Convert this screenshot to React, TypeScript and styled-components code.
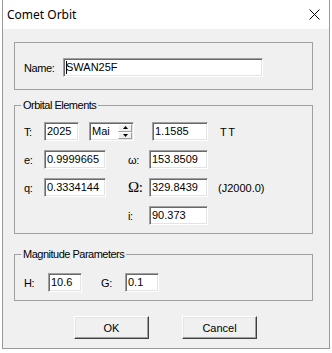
import styled, { createGlobalStyle } from "styled-components";

const GlobalStyle = createGlobalStyle`
  html, body {
    margin: 0;
    padding: 0;
    background: #ffffff;
  }
  body {
    font-family: "Liberation Sans", Arial, sans-serif;
    font-size: 11px;
    color: #000;
  }
`;

const Dialog = styled.div`
  margin-left: 2px;
  width: 328px;
  height: 349px;
  box-sizing: border-box;
  border: 1px solid #9a9a9a;
  border-top: none;
  background: #f0f0f0;
  display: flex;
  flex-direction: column;
`;

const TitleBar = styled.div`
  height: 29px;
  flex: 0 0 auto;
  background: #fff;
  display: flex;
  align-items: center;
  justify-content: space-between;
  padding: 0 9px 0 4px;
  font-family: "Noto Sans", "Open Sans", sans-serif;
  font-size: 12px;
`;

const Body = styled.div`
  flex: 1 1 auto;
  display: flex;
  flex-direction: column;
  padding: 13px 16px 0 11px;
`;

const Group = styled.fieldset<{ $top?: number }>`
  margin: ${(p) => p.$top ?? 0}px 0 0 0;
  border: 1px solid #a0a0a0;
  padding: ${(p) => (p.$top === undefined ? "15px 9px 12px" : "10px 9px 8px")};
  min-width: 0;
`;

const Legend = styled.legend`
  padding: 0 2px;
  margin-left: -3px;
  line-height: 13px;
  font-size: 11px;
  letter-spacing: -0.5px;
`;

const Row = styled.div<{ $gap?: number }>`
  display: flex;
  align-items: center;
  height: 19px;
  margin-top: ${(p) => p.$gap ?? 0}px;
`;

const Grid = styled.div`
  display: grid;
  grid-template-columns: 20px 62px 22px 21px 59px auto;
  grid-auto-rows: 19px;
  row-gap: 9px;
  align-items: center;
  margin-top: 9px;
`;

const Label = styled.span<{ $w: number; $ml?: number }>`
  width: ${(p) => p.$w}px;
  margin-left: ${(p) => p.$ml ?? 0}px;
  flex: 0 0 auto;
  letter-spacing: -0.4px;
  white-space: nowrap;
`;

const GreekLabel = styled(Label)`
  font-family: "Liberation Serif", "Times New Roman", serif;
  font-size: 15px;
  line-height: 1;
`;

const Note = styled.span<{ $ml: number; $spaced?: boolean }>`
  margin-left: ${(p) => p.$ml}px;
  letter-spacing: ${(p) => (p.$spaced ? "1.5px" : "0")};
  white-space: nowrap;
`;

const Field = styled.div<{ $w: number; $ml?: number }>`
  width: ${(p) => p.$w}px;
  margin-left: ${(p) => p.$ml ?? 0}px;
  flex: 0 0 auto;
  height: 19px;
  box-sizing: border-box;
  background: #fff;
  border: 1px solid;
  border-color: #a0a0a0 #ffffff #ffffff #a0a0a0;
  box-shadow: inset 1px 1px 0 #696969, inset -1px -1px 0 #e3e3e3;
  padding: 0 1px 0 2px;
  display: flex;
  align-items: center;
  line-height: 1;
  white-space: nowrap;
`;

const Caret = styled.span`
  width: 1px;
  height: 13px;
  background: #000;
  margin-right: -1px;
`;

const Spinner = styled.div`
  margin-left: auto;
  width: 14px;
  height: 15px;
  display: flex;
  flex-direction: column;
`;

const SpinHalf = styled.div`
  flex: 1 1 0;
  box-sizing: border-box;
  border: 1px solid;
  border-color: #fff #a0a0a0 #a0a0a0 #fff;
  background: #f0f0f0;
  display: flex;
  align-items: center;
  justify-content: center;
`;

const ButtonRow = styled.div`
  display: flex;
  gap: 33px;
  padding-left: 60px;
  margin-top: 15px;
`;

const Button = styled.button`
  width: 75px;
  height: 23px;
  box-sizing: border-box;
  background: #f0f0f0;
  border: 1px solid;
  border-color: #ffffff #404040 #404040 #ffffff;
  box-shadow: inset -1px -1px 0 #a0a0a0, inset 1px 1px 0 #e3e3e3;
  font-family: "Liberation Sans", Arial, sans-serif;
  font-size: 11px;
  color: #000;
  padding: 0;
`;

function Arrow({ up }: { up: boolean }) {
  return (
    <svg width="5" height="3" viewBox="0 0 5 3">
      <path d={up ? "M2.5 0 L5 3 L0 3 Z" : "M0 0 L5 0 L2.5 3 Z"} fill="#000" />
    </svg>
  );
}

function CloseIcon() {
  return (
    <svg width="11" height="11" viewBox="0 0 11 11">
      <path d="M0.5 0.5 L10.5 10.5 M10.5 0.5 L0.5 10.5" stroke="#000" strokeWidth="1" fill="none" />
    </svg>
  );
}

export default function App() {
  return (
    <>
      <GlobalStyle />
      <Dialog>
        <TitleBar>
          <span>Comet Orbit</span>
          <CloseIcon />
        </TitleBar>
        <Body>
          <Group>
            <Row>
              <Label $w={39}>Name:</Label>
              <Field $w={200}>
                <Caret />
                SWAN25F
              </Field>
            </Row>
          </Group>

          <Group $top={9}>
            <Legend>Orbital Elements</Legend>
            <Row>
              <Label $w={20}>T:</Label>
              <Field $w={35}>2025</Field>
              <Field $w={45} $ml={10}>
                Mai
                <Spinner>
                  <SpinHalf>
                    <Arrow up />
                  </SpinHalf>
                  <SpinHalf>
                    <Arrow up={false} />
                  </SpinHalf>
                </Spinner>
              </Field>
              <Field $w={56} $ml={18}>1.1585</Field>
              <Note $ml={12} $spaced>TT</Note>
            </Row>
            <Grid>
              <Label $w={20}>e:</Label>
              <Field $w={62}>0.9999665</Field>
              <span />
              <Label $w={21}>ω:</Label>
              <Field $w={59}>153.8509</Field>
              <span />

              <Label $w={20}>q:</Label>
              <Field $w={62}>0.3334144</Field>
              <span />
              <GreekLabel $w={21}>Ω:</GreekLabel>
              <Field $w={59}>329.8439</Field>
              <Note $ml={10}>(J2000.0)</Note>

              <span />
              <span />
              <span />
              <Label $w={21}>i:</Label>
              <Field $w={59}>90.373</Field>
              <span />
            </Grid>
          </Group>

          <Group $top={14}>
            <Legend>Magnitude Parameters</Legend>
            <Row $gap={2}>
              <Label $w={24}>H:</Label>
              <Field $w={34}>10.6</Field>
              <Label $w={24} $ml={19}>G:</Label>
              <Field $w={34}>0.1</Field>
            </Row>
          </Group>

          <ButtonRow>
            <Button>OK</Button>
            <Button>Cancel</Button>
          </ButtonRow>
        </Body>
      </Dialog>
    </>
  );
}
